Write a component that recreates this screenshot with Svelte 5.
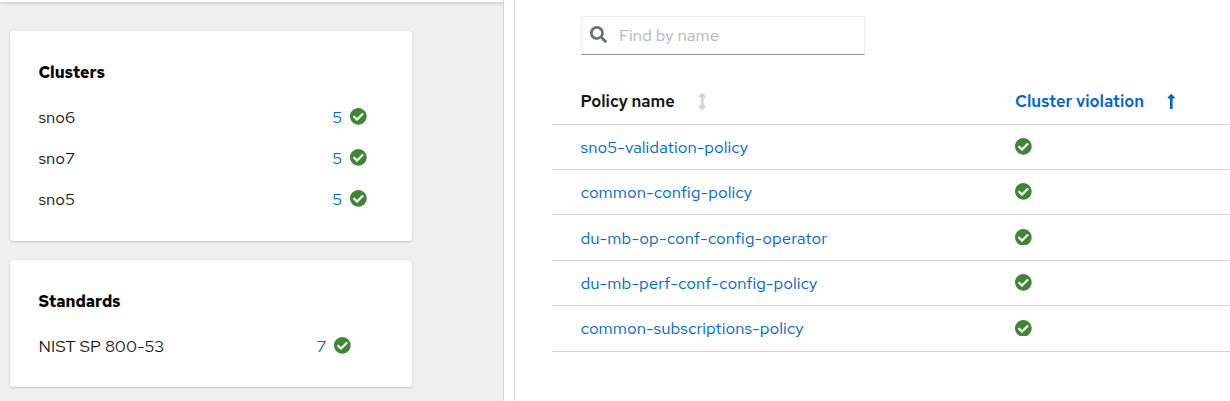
<script>
  const clusters = [
    { name: 'sno6', count: 5 },
    { name: 'sno7', count: 5 },
    { name: 'sno5', count: 5 }
  ];
  const policies = [
    { name: 'sno5-validation-policy', height: 45 },
    { name: 'common-config-policy', height: 45 },
    { name: 'du-mb-op-conf-config-operator', height: 46 },
    { name: 'du-mb-perf-conf-config-policy', height: 45 },
    { name: 'common-subscriptions-policy', height: 46 }
  ];
</script>

{#snippet check()}
  <svg class="check" viewBox="8 8 496 496" aria-hidden="true"><path d="M504 256c0 136.967-111.033 248-248 248S8 392.967 8 256 119.033 8 256 8s248 111.033 248 248zM227.314 387.314l184-184c6.248-6.248 6.248-16.379 0-22.627l-22.627-22.627c-6.248-6.249-16.379-6.249-22.628 0L216 308.118l-70.059-70.059c-6.248-6.248-16.379-6.248-22.628 0l-22.627 22.627c-6.248 6.248-6.248 16.379 0 22.627l104 104c6.249 6.249 16.379 6.249 22.628.001z" /></svg>
{/snippet}

<div class="page">
  <aside>
    <div class="strip"></div>
    <section class="card clusters">
      <h2>Clusters</h2>
      {#each clusters as c}
        <div class="item"><span class="label">{c.name}</span><a class="count">{c.count}</a>{@render check()}</div>
      {/each}
    </section>
    <section class="card standards">
      <h2>Standards</h2>
      <div class="item"><span class="label">NIST SP 800-53</span><a class="count">7</a>{@render check()}</div>
    </section>
  </aside>
  <div class="splitter"></div>
  <main>
    <div class="search">
      <svg viewBox="0 0 512 512" aria-hidden="true"><path d="M505 442.7L405.3 343c-4.5-4.5-10.6-7-17-7H372c27.6-35.3 44-79.7 44-128C416 93.1 322.9 0 208 0S0 93.1 0 208s93.1 208 208 208c48.3 0 92.7-16.4 128-44v16.3c0 6.4 2.5 12.5 7 17l99.7 99.7c9.4 9.4 24.6 9.4 33.9 0l28.3-28.3c9.4-9.4 9.4-24.6.1-34zM208 336c-70.7 0-128-57.2-128-128 0-70.7 57.2-128 128-128 70.7 0 128 57.2 128 128 0 70.7-57.2 128-128 128z" /></svg>
      <span>Find by name</span>
    </div>
    <div class="table">
      <div class="row head">
        <div class="cell"><span>Policy name</span>
          <svg class="arrow both" viewBox="0 0 256 512" aria-hidden="true"><path d="M214.059 377.941H168V134.059h46.059c21.382 0 32.09-25.851 16.971-40.971L144.971 7.029c-9.373-9.373-24.568-9.373-33.941 0L24.971 93.088c-15.119 15.119-4.411 40.971 16.971 40.971H88v243.882H41.941c-21.382 0-32.09 25.851-16.971 40.971l86.059 86.059c9.373 9.373 24.568 9.373 33.941 0l86.059-86.059c15.12-15.119 4.412-40.971-16.97-40.971z" /></svg>
        </div>
        <div class="cell sorted"><span>Cluster violation</span>
          <svg class="arrow up" viewBox="0 0 256 512" aria-hidden="true"><path d="M88 166.059V468c0 6.627 5.373 12 12 12h56c6.627 0 12-5.373 12-12V166.059h46.059c21.382 0 32.09-25.851 16.971-40.971l-86.059-86.059c-9.373-9.373-24.569-9.373-33.941 0l-86.059 86.059c-15.119 15.119-4.411 40.971 16.971 40.971H88z" /></svg>
        </div>
      </div>
      {#each policies as p}
        <div class="row" style="height: {p.height}px">
          <div class="cell"><a>{p.name}</a></div>
          <div class="cell">{@render check()}</div>
        </div>
      {/each}
    </div>
  </main>
</div>

<style>
  .page { display: flex; width: 1230px; height: 401px; overflow: hidden; background: #fff; color: #151515; font: 400 16.8px/24px "Red Hat Text", Inter, sans-serif; }
  aside { width: 503px; background: #efefef; flex: none; }
  .strip { height: 2px; background: #fff; box-shadow: 0 1px 3px rgba(3, 3, 3, .25); margin-bottom: 29px; }
  .splitter { width: 10px; flex: none; border: 1px solid #d2d2d2; border-width: 0 1px; }
  .card { box-sizing: border-box; width: 402px; margin-left: 10px; padding: 30px 28px 0 28.5px; background: #fff; border-radius: 3px; box-shadow: 0 1px 2px rgba(3, 3, 3, .16), 0 0 2px rgba(3, 3, 3, .08); }
  .clusters { height: 210px; margin-bottom: 19px; }
  .standards { height: 127px; }
  h2 { margin: 0 0 20px; font-size: 16.1px; line-height: 24px; font-weight: 700; color: #030303; }
  .item { display: flex; align-items: center; height: 24px; margin-bottom: 17px; padding-right: 17px; }
  .label { flex: 1; }
  .standards .item { padding-right: 33px; }
  a { color: #0066cc; }
  .count { margin-right: 8px; }
  .check { display: block; width: 16.7px; height: 16.7px; margin-bottom: 1px; fill: #3e8635; }
  main { flex: 1; }
  .search { box-sizing: border-box; width: 284px; height: 39px; margin: 16px 0 0 66px; padding-left: 8px; display: flex; align-items: center; border: 1px solid #ededed; border-bottom-color: #8a8d90; color: #b3b5b8; }
  .search span { padding-bottom: 2px; }
  .search svg { width: 17px; height: 17px; fill: #6a6e73; margin: -3px 12px 0 0; }
  .table { margin-left: 37px; padding-top: 24px; }
  .row { box-sizing: border-box; display: grid; grid-template-columns: 463px 1fr; align-items: center; border-bottom: 1px solid #d2d2d2; }
  .row.head { height: 46px; font-size: 16.6px; font-weight: 600; }
  .row.head span { padding-bottom: 2px; }
  .row:last-child a { padding-bottom: 1px; }
  .cell { display: flex; align-items: center; }
  .cell:first-child { padding-left: 28.6px; }
  .sorted { color: #0066cc; }
  .arrow { width: 8.5px; height: 17px; margin-left: 23px; }
  .both { fill: #d2d2d2; }
  .up { fill: #0066cc; }
</style>
